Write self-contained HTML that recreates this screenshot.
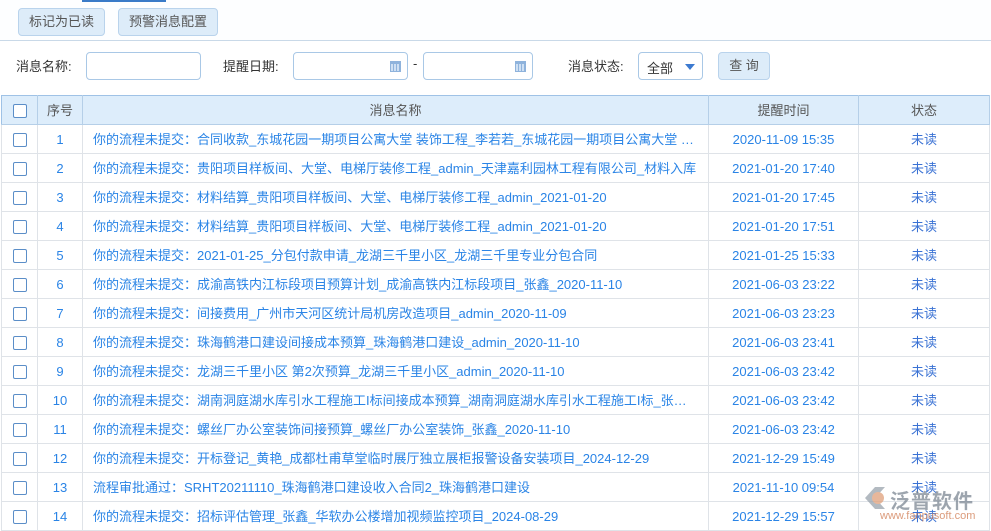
<!DOCTYPE html>
<html><head><meta charset="utf-8"><style>
*{margin:0;padding:0;box-sizing:border-box}
body{width:991px;height:530px;overflow:hidden;background:#fff;font-family:"Liberation Sans","Noto Sans CJK SC",sans-serif;font-size:13px;color:#333;position:relative}
.top{position:absolute;left:0;top:0;width:991px;height:41px;background:#fdfeff;border-bottom:1px solid #c9d9e8}
.top:before{content:"";position:absolute;left:82px;top:0;width:84px;height:2px;background:#3a7bc8}
.btn{position:absolute;top:8px;height:28px;background:#ddecf9;border:1px solid #b9d3ec;border-radius:4px;color:#555;font-size:13px;line-height:26px;text-align:center}
.lbl{position:absolute;top:56px;font-size:13px;color:#333}
.inp{position:absolute;top:52px;height:28px;border:1px solid #a9c8e6;border-radius:4px;background:#fff}
.cal{position:absolute;right:6px;top:8px;width:11px;height:11px;border:1px solid #8fb3dc;background:repeating-linear-gradient(90deg,#cfe0f3 0 2px,#8fb3dc 2px 3px);border-top:3px solid #8fb3dc}
table{position:absolute;left:1px;top:95px;border-collapse:collapse;width:988px;table-layout:fixed}
td,th{border:1px solid #dfe3e8;height:29px;padding:0;text-align:center;font-weight:normal;white-space:nowrap;overflow:hidden;line-height:27px}
th{background:#ddedfb;color:#555;border-color:#b5cfe8;border-top:1px solid #9fc2e6}
tr:first-child th:first-child{border-left:1px solid #9fc2e6}
td{color:#2a84e6}
td.n{text-align:left;padding-left:10px;text-overflow:ellipsis}
td.s{color:#3a72d4}
.cb{display:inline-block;width:14px;height:14px;border:1px solid #5b8ec8;border-radius:2px;vertical-align:middle;background:#fff}
</style></head><body>
<div class="top"></div>
<div class="btn" style="left:18px;width:87px">标记为已读</div>
<div class="btn" style="left:118px;width:100px">预警消息配置</div>
<div class="lbl" style="left:16px">消息名称:</div>
<div class="inp" style="left:86px;width:115px"></div>
<div class="lbl" style="left:223px">提醒日期:</div>
<div class="inp" style="left:293px;width:115px"><div class="cal"></div></div>
<div class="lbl" style="left:413px">-</div>
<div class="inp" style="left:423px;width:110px"><div class="cal"></div></div>
<div class="lbl" style="left:568px">消息状态:</div>
<div class="inp" style="left:638px;width:65px;padding:5px 0 0 8px">全部<span style="position:absolute;right:7px;top:11px;border-left:5px solid transparent;border-right:5px solid transparent;border-top:6px solid #3c7ad0"></span></div>
<div class="btn" style="left:718px;top:52px;width:52px;height:28px">查 询</div>
<table>
<colgroup><col style="width:36px"><col style="width:45px"><col style="width:626px"><col style="width:150px"><col style="width:131px"></colgroup>
<tr><th><span class="cb"></span></th><th>序号</th><th>消息名称</th><th>提醒时间</th><th>状态</th></tr>
<tr><td><span class="cb"></span></td><td>1</td><td class="n">你的流程未提交：合同收款_东城花园一期项目公寓大堂 装饰工程_李若若_东城花园一期项目公寓大堂 …</td><td>2020-11-09 15:35</td><td class="s">未读</td></tr>
<tr><td><span class="cb"></span></td><td>2</td><td class="n">你的流程未提交：贵阳项目样板间、大堂、电梯厅装修工程_admin_天津嘉利园林工程有限公司_材料入库</td><td>2021-01-20 17:40</td><td class="s">未读</td></tr>
<tr><td><span class="cb"></span></td><td>3</td><td class="n">你的流程未提交：材料结算_贵阳项目样板间、大堂、电梯厅装修工程_admin_2021-01-20</td><td>2021-01-20 17:45</td><td class="s">未读</td></tr>
<tr><td><span class="cb"></span></td><td>4</td><td class="n">你的流程未提交：材料结算_贵阳项目样板间、大堂、电梯厅装修工程_admin_2021-01-20</td><td>2021-01-20 17:51</td><td class="s">未读</td></tr>
<tr><td><span class="cb"></span></td><td>5</td><td class="n">你的流程未提交：2021-01-25_分包付款申请_龙湖三千里小区_龙湖三千里专业分包合同</td><td>2021-01-25 15:33</td><td class="s">未读</td></tr>
<tr><td><span class="cb"></span></td><td>6</td><td class="n">你的流程未提交：成渝高铁内江标段项目预算计划_成渝高铁内江标段项目_张鑫_2020-11-10</td><td>2021-06-03 23:22</td><td class="s">未读</td></tr>
<tr><td><span class="cb"></span></td><td>7</td><td class="n">你的流程未提交：间接费用_广州市天河区统计局机房改造项目_admin_2020-11-09</td><td>2021-06-03 23:23</td><td class="s">未读</td></tr>
<tr><td><span class="cb"></span></td><td>8</td><td class="n">你的流程未提交：珠海鹤港口建设间接成本预算_珠海鹤港口建设_admin_2020-11-10</td><td>2021-06-03 23:41</td><td class="s">未读</td></tr>
<tr><td><span class="cb"></span></td><td>9</td><td class="n">你的流程未提交：龙湖三千里小区 第2次预算_龙湖三千里小区_admin_2020-11-10</td><td>2021-06-03 23:42</td><td class="s">未读</td></tr>
<tr><td><span class="cb"></span></td><td>10</td><td class="n">你的流程未提交：湖南洞庭湖水库引水工程施工I标间接成本预算_湖南洞庭湖水库引水工程施工I标_张…</td><td>2021-06-03 23:42</td><td class="s">未读</td></tr>
<tr><td><span class="cb"></span></td><td>11</td><td class="n">你的流程未提交：螺丝厂办公室装饰间接预算_螺丝厂办公室装饰_张鑫_2020-11-10</td><td>2021-06-03 23:42</td><td class="s">未读</td></tr>
<tr><td><span class="cb"></span></td><td>12</td><td class="n">你的流程未提交：开标登记_黄艳_成都杜甫草堂临时展厅独立展柜报警设备安装项目_2024-12-29</td><td>2021-12-29 15:49</td><td class="s">未读</td></tr>
<tr><td><span class="cb"></span></td><td>13</td><td class="n">流程审批通过：SRHT20211110_珠海鹤港口建设收入合同2_珠海鹤港口建设</td><td>2021-11-10 09:54</td><td class="s">未读</td></tr>
<tr><td><span class="cb"></span></td><td>14</td><td class="n">你的流程未提交：招标评估管理_张鑫_华软办公楼增加视频监控项目_2024-08-29</td><td>2021-12-29 15:57</td><td class="s">未读</td></tr>
</table>
<div style="position:absolute;left:862px;top:483px;width:125px;height:40px;opacity:.75">
<svg width="26" height="26" style="position:absolute;left:0;top:2px" viewBox="0 0 26 26"><path d="M13 2 L3 13 L13 24 L23 24 L13 13 L23 2Z" fill="#9aa3ad"/><circle cx="16" cy="13" r="6" fill="#e0a07a"/></svg>
<div style="position:absolute;left:28px;top:2px;font-size:20px;color:#7d8894;font-weight:bold;letter-spacing:1px">泛普软件</div>
<div style="position:absolute;left:18px;top:27px;font-size:11px;color:#d07a50">www.fanpusoft.com</div>
</div>
</body></html>
